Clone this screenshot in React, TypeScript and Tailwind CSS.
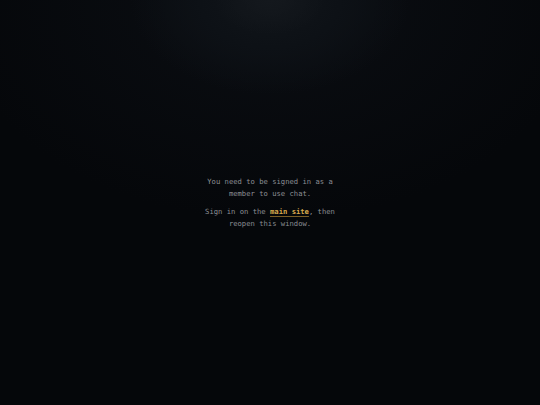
export default function App() {
  return (
    <div className="relative flex h-[405px] w-full items-center justify-center overflow-hidden bg-[#05070a]">
      {/* soft glow at the top */}
      <div className="pointer-events-none absolute inset-0 bg-[radial-gradient(ellipse_320px_220px_at_270px_0px,#0b0e13_0%,transparent_100%)]" />
      <div className="pointer-events-none absolute inset-0 bg-[radial-gradient(ellipse_140px_95px_at_270px_0px,#11151a_0%,#0d1116_50%,transparent_100%)]" />
      <div className="pointer-events-none absolute inset-0 bg-[radial-gradient(ellipse_55px_35px_at_270px_0px,#14181d_0%,transparent_100%)]" />

      <div className="relative text-center font-['DejaVu_Sans_Mono',monospace] text-[7.2px] leading-[12px] text-[#8c8f94]">
        <p>
          You need to be signed in as a<br />
          member to use chat.
        </p>
        <p className="mt-[6px]">
          Sign in on the{' '}
          <a href="#" className="font-bold text-[#d6a94e] underline decoration-[#7a5e26] underline-offset-2">
            main site
          </a>
          , then
          <br />
          reopen this window.
        </p>
      </div>
    </div>
  );
}
